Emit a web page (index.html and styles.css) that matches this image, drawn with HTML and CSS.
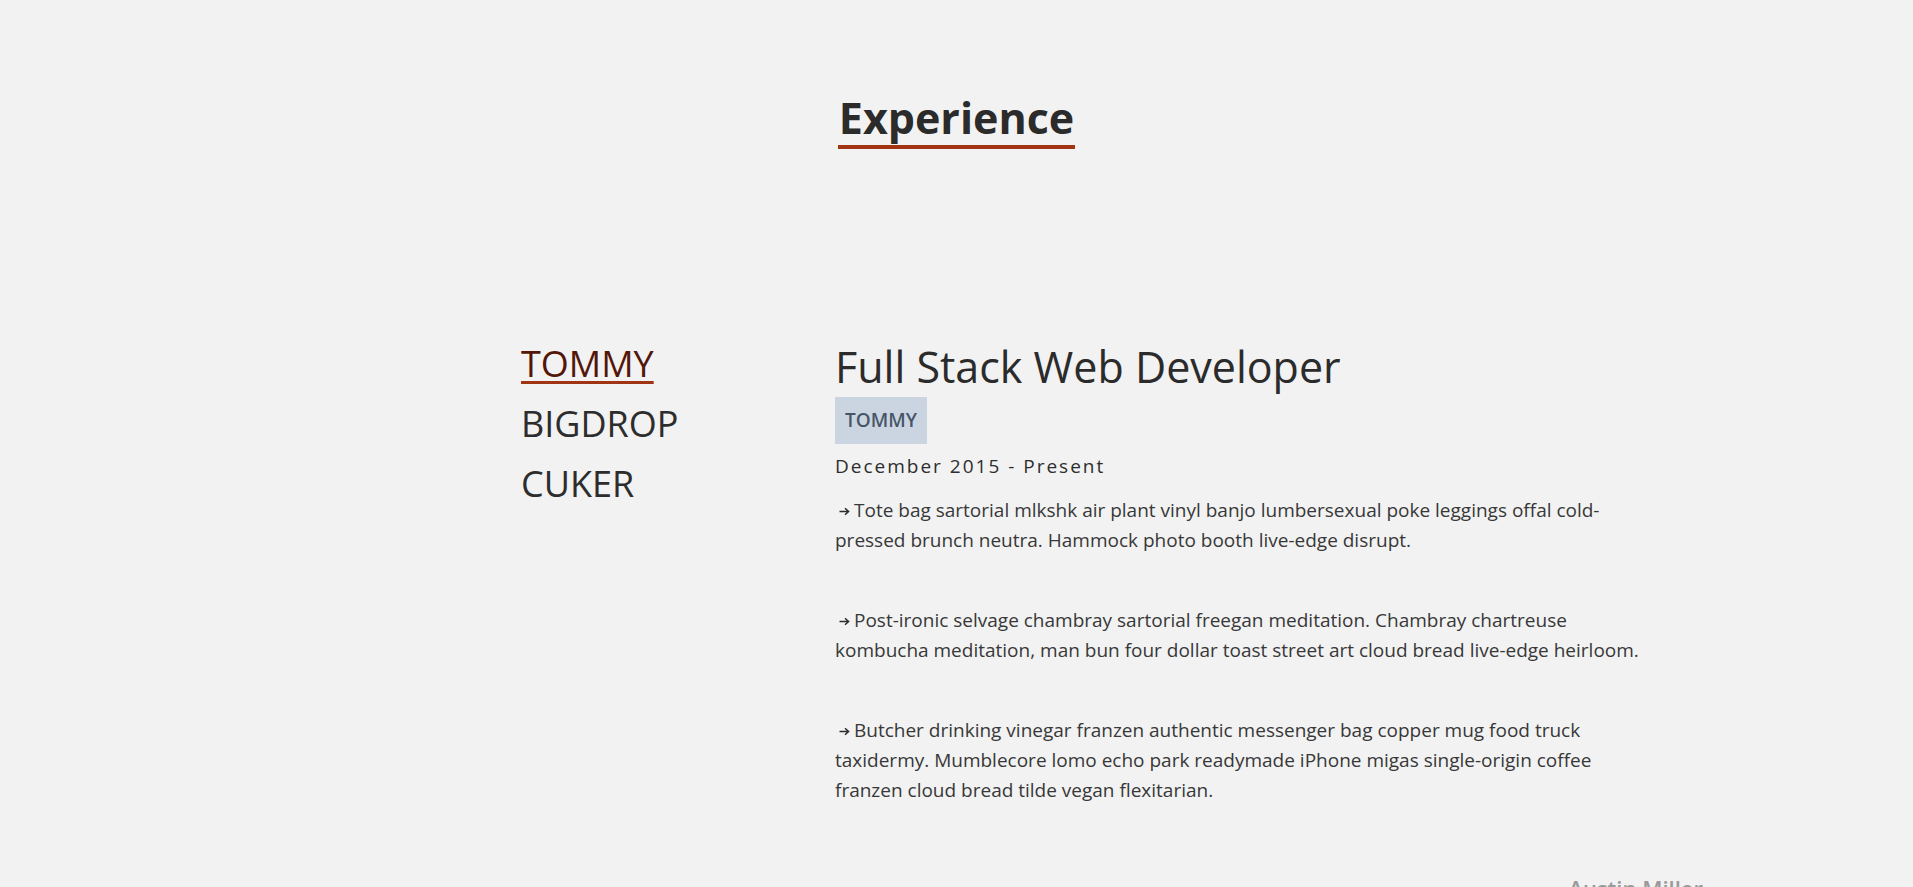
FILE: index.html
```html
<!DOCTYPE html>
<html lang="en">
<head>
<meta charset="utf-8">
<title>Experience</title>
<link rel="stylesheet" href="styles.css">
</head>
<body>
<section class="experience">
  <header class="section-head">
    <h2 class="section-title">Experience</h2>
  </header>
  <div class="jobs">
    <nav class="job-tabs">
      <a class="job-tab is-active" href="#">TOMMY</a>
      <a class="job-tab" href="#">BIGDROP</a>
      <a class="job-tab" href="#">CUKER</a>
    </nav>
    <article class="job">
      <h3 class="job-title">Full Stack Web Developer</h3>
      <span class="job-company">TOMMY</span>
      <p class="job-dates">December 2015 - Present</p>
      <div class="job-duties">
        <p class="duty"><svg class="duty-arrow" viewBox="0 0 11 9" width="11" height="9"><path d="M0.5 4.5H9.5M6 1.2L9.6 4.5L6 7.8" fill="none" stroke="#2d2d2d" stroke-width="1.5"/></svg>Tote bag sartorial mlkshk air plant vinyl banjo lumbersexual poke leggings offal cold-pressed brunch neutra. Hammock photo booth live-edge disrupt.</p>
        <p class="duty"><svg class="duty-arrow" viewBox="0 0 11 9" width="11" height="9"><path d="M0.5 4.5H9.5M6 1.2L9.6 4.5L6 7.8" fill="none" stroke="#2d2d2d" stroke-width="1.5"/></svg>Post-ironic selvage chambray sartorial freegan meditation. Chambray chartreuse kombucha meditation, man bun four dollar toast street art cloud bread live-edge heirloom.</p>
        <p class="duty"><svg class="duty-arrow" viewBox="0 0 11 9" width="11" height="9"><path d="M0.5 4.5H9.5M6 1.2L9.6 4.5L6 7.8" fill="none" stroke="#2d2d2d" stroke-width="1.5"/></svg>Butcher drinking vinegar franzen authentic messenger bag copper mug food truck taxidermy. Mumblecore lomo echo park readymade iPhone migas single-origin coffee franzen cloud bread tilde vegan flexitarian.</p>
      </div>
    </article>
  </div>
</section>
<footer class="site-footer">
  <p class="credit">Austin Miller</p>
</footer>
</body>
</html>
```

FILE: styles.css
```css
* { box-sizing: border-box; }

html, body {
  margin: 0;
  padding: 0;
  background: #f2f2f2;
  color: #2d2d2d;
  font-family: "Open Sans", "Noto Sans", "Liberation Sans", sans-serif;
}

.experience {
  padding-top: 90px;
}

.section-head {
  display: flex;
  justify-content: center;
}

.section-title {
  margin: 0;
  font-size: 43px;
  line-height: 55px;
  font-weight: 700;
  color: #2b2b2b;
  border-bottom: 4px solid #a13412;
  padding: 0 1px;
}

.jobs {
  margin: 185px 0 0 521px;
  display: flex;
}

.job-tabs {
  width: 314px;
  flex: none;
  display: flex;
  flex-direction: column;
  align-items: flex-start;
}

.job-tab {
  font-size: 36px;
  line-height: 60px;
  color: #2d2d2d;
  text-decoration: none;
  font-weight: 400;
}

.job-tab.is-active {
  color: #52160a;
  text-decoration: underline;
  text-decoration-color: #a13412;
  text-decoration-thickness: 3px;
  text-underline-offset: 4px;
}

.job {
  width: 815px;
  padding-top: 6px;
}

.job-title {
  margin: 0;
  font-size: 43px;
  line-height: 53px;
  font-weight: 400;
  color: #2b2b2b;
}

.job-company {
  display: inline-block;
  margin-top: 4px;
  height: 47px;
  padding: 0 10px;
  line-height: 47px;
  font-size: 19px;
  font-weight: 600;
  color: #475569;
  background: #cbd5e1;
}

.job-dates {
  margin: 8px 0 0;
  font-size: 19px;
  line-height: 28px;
  letter-spacing: 2px;
  color: #2d2d2d;
}

.job-duties {
  margin-top: 15px;
}

.duty {
  margin: 0 0 50px;
  font-size: 19px;
  line-height: 30px;
  color: #383838;
}

.duty-arrow {
  margin: 0 4px 1px 4px;
}

.site-footer {
  display: flex;
  justify-content: flex-end;
  padding: 18px 210px 0 0;
}

.credit {
  margin: 0;
  font-size: 22px;
  font-weight: 600;
  color: #9a9a9a;
}
```
